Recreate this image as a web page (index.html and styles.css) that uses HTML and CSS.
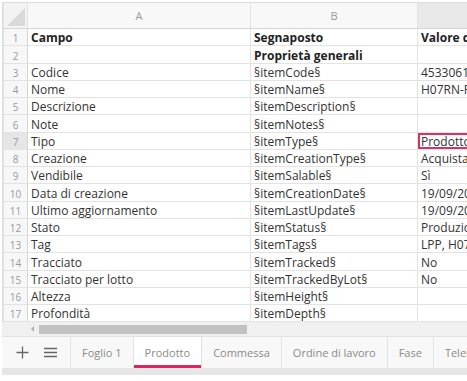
FILE: index.html
```html
<!DOCTYPE html>
<html lang="it">
<head>
    <meta charset="UTF-8">
    <meta name="viewport" content="width=device-width, initial-scale=1.0">
    <title>Foglio - Prodotto</title>
    <link rel="stylesheet" href="styles.css">
</head>
<body>
    <div class="workbook">
        <!-- Grid -->
        <div class="grid-wrap">
            <table class="grid">
                <colgroup>
                    <col class="col-rh">
                    <col class="col-a">
                    <col class="col-b">
                    <col class="col-c">
                </colgroup>
                <thead>
                    <tr>
                        <th class="corner"><span class="corner-tri"></span></th>
                        <th>A</th>
                        <th>B</th>
                        <th class="hl">C</th>
                    </tr>
                </thead>
                <tbody>
                    <tr><th>1</th><td class="b">Campo</td><td class="b">Segnaposto</td><td class="b">Valore di esempio</td></tr>
                    <tr><th>2</th><td></td><td class="b">Proprietà generali</td><td></td></tr>
                    <tr><th>3</th><td>Codice</td><td>§itemCode§</td><td>45330611</td></tr>
                    <tr><th>4</th><td>Nome</td><td>§itemName§</td><td>H07RN-F 3G1,5</td></tr>
                    <tr><th>5</th><td>Descrizione</td><td>§itemDescription§</td><td></td></tr>
                    <tr><th>6</th><td>Note</td><td>§itemNotes§</td><td></td></tr>
                    <tr><th class="hl">7</th><td>Tipo</td><td>§itemType§</td><td class="active">Prodotto</td></tr>
                    <tr><th>8</th><td>Creazione</td><td>§itemCreationType§</td><td>Acquistato</td></tr>
                    <tr><th>9</th><td>Vendibile</td><td>§itemSalable§</td><td>Sì</td></tr>
                    <tr><th>10</th><td>Data di creazione</td><td>§itemCreationDate§</td><td>19/09/2023</td></tr>
                    <tr><th>11</th><td>Ultimo aggiornamento</td><td>§itemLastUpdate§</td><td>19/09/2023</td></tr>
                    <tr><th>12</th><td>Stato</td><td>§itemStatus§</td><td>Produzione</td></tr>
                    <tr><th>13</th><td>Tag</td><td>§itemTags§</td><td>LPP, H07RN-F</td></tr>
                    <tr><th>14</th><td>Tracciato</td><td>§itemTracked§</td><td>No</td></tr>
                    <tr><th>15</th><td>Tracciato per lotto</td><td>§itemTrackedByLot§</td><td>No</td></tr>
                    <tr><th>16</th><td>Altezza</td><td>§itemHeight§</td><td></td></tr>
                    <tr><th>17</th><td>Profondità</td><td>§itemDepth§</td><td></td></tr>
                </tbody>
            </table>
        </div>

        <!-- Horizontal scrollbar -->
        <div class="hscroll">
            <span class="arrow"></span>
            <div class="thumb"></div>
        </div>

        <!-- Sheet tabs -->
        <div class="tabs">
            <div class="tab-tools">
                <svg width="13" height="13" viewBox="0 0 13 13"><path d="M6.5 0.5v12M0.5 6.5h12" stroke="#666" stroke-width="1.3" fill="none"/></svg>
                <svg width="13" height="11" viewBox="0 0 13 11"><path d="M0 1.5h13M0 5.5h13M0 9.5h13" stroke="#666" stroke-width="1.3" fill="none"/></svg>
            </div>
            <div class="tab">Foglio 1</div>
            <div class="tab active">Prodotto</div>
            <div class="tab">Commessa</div>
            <div class="tab">Ordine di lavoro</div>
            <div class="tab">Fase</div>
            <div class="tab">Telemetria</div>
        </div>
        <div class="status"></div>
    </div>
</body>
</html>
```

FILE: styles.css
```css
/* General body styles */
body {
    margin: 0;
    padding: 0;
    background-color: #ffffff;
    font-family: "Open Sans", "Liberation Sans", sans-serif;
    color: #333333;
    overflow: hidden;
}

.workbook {
    padding: 2px 0 0 2px;
    width: 465px;
    overflow: hidden;
}

/* Grid */
.grid-wrap {
    overflow: hidden;
    border-left: 1px solid #dcdcdc;
}
.grid {
    border-collapse: collapse;
    table-layout: fixed;
    width: 614px;
}
.col-rh { width: 24px; }
.col-a { width: 223px; }
.col-b { width: 167px; }
.col-c { width: 200px; }

.grid th,
.grid td {
    border: 1px solid #e3e3e3;
    padding: 0;
    white-space: nowrap;
    overflow: hidden;
}
.grid thead th {
    height: 25px;
    background-color: #f8f8f8;
    color: #9a9a9a;
    font-size: 11px;
    font-weight: normal;
    border-top: 1px solid #dcdcdc;
    border-bottom: 1px solid #d6d6d6;
}
.grid thead th.hl {
    background-color: #e9e9e9;
}
.grid thead th.corner {
    position: relative;
    background-color: #f3f3f3;
}
.corner-tri {
    position: absolute;
    right: 2px;
    bottom: 2px;
    width: 0;
    height: 0;
    border-left: 18px solid transparent;
    border-bottom: 18px solid #d9d9d9;
}
.grid tbody tr {
    height: 17.25px;
}
.grid tbody th {
    background-color: #f7f7f7;
    color: #9a9a9a;
    font-size: 10px;
    font-weight: normal;
    text-align: center;
    vertical-align: bottom;
    line-height: 14px;
    border-right: 1px solid #d6d6d6;
}
.grid tbody th.hl {
    background-color: #e6e6e6;
}
.grid td {
    font-size: 12px;
    line-height: 15px;
    vertical-align: bottom;
    padding: 0 3px 0 3px;
    color: #333333;
}
.grid td.b {
    font-weight: bold;
    color: #222222;
}
.grid td.active {
    box-shadow: inset 0 0 0 2px #d6336c;
}

/* Horizontal scrollbar */
.hscroll {
    height: 14px;
    background-color: #f0f0f0;
    display: flex;
    align-items: center;
    padding-left: 29px;
    gap: 5px;
}
.hscroll .arrow {
    width: 0;
    height: 0;
    border-top: 3px solid transparent;
    border-bottom: 3px solid transparent;
    border-right: 3px solid #b0b0b0;
}
.hscroll .thumb {
    width: 208px;
    height: 9px;
    background-color: #c1c1c1;
}

/* Sheet tabs */
.tabs {
    display: flex;
    height: 31px;
    background-color: #f8f8f8;
    border-top: 1px solid #e2e2e2;
    font-size: 11px;
    color: #8a8a8a;
}
.tab-tools {
    flex-shrink: 0;
    display: flex;
    align-items: center;
    gap: 15px;
    padding: 0 13px 0 14px;
    width: 41px;
    border-right: 1px solid #e2e2e2;
}
.tab {
    flex-shrink: 0;
    display: flex;
    align-items: center;
    padding: 0 11px;
    border-right: 1px solid #e2e2e2;
    white-space: nowrap;
}
.tab.active {
    background-color: #ffffff;
    box-shadow: inset 0 -3px 0 #e0245e;
}
.status {
    height: 7px;
    background-color: #e6e6e6;
}
```
